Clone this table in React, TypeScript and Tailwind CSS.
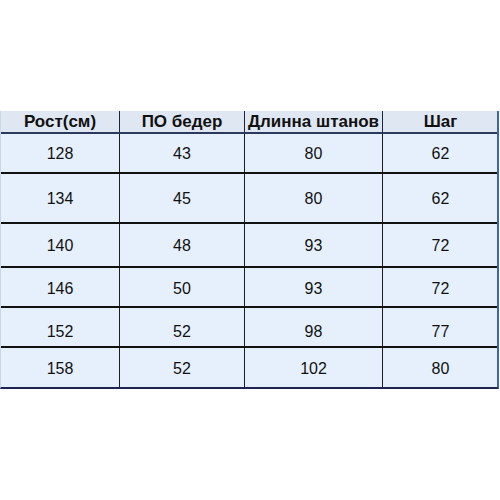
const header = ['Рост(см)', 'ПО бедер', 'Длинна штанов', 'Шаг'];

const rows = [
  { h: 'h-[40px]', pad: 'pt-[2px]', cells: ['128', '43', '80', '62'] },
  { h: 'h-[50px]', pad: 'pt-[2px]', cells: ['134', '45', '80', '62'] },
  { h: 'h-[44px]', pad: 'pt-[2px]', cells: ['140', '48', '93', '72'] },
  { h: 'h-[40px]', pad: 'pt-[4px]', cells: ['146', '50', '93', '72'] },
  { h: 'h-[40px]', pad: 'pt-[10px]', cells: ['152', '52', '98', '77'] },
  { h: 'h-[39px]', pad: 'pt-[2px]', cells: ['158', '52', '102', '80'] },
];

const cols = 'grid grid-cols-[119px_125px_138px_115px]';

export default function App() {
  return (
    <div className="w-[500px] h-[500px] bg-white pt-[111px] font-['Liberation_Sans',Arial,sans-serif]">
      <div className="w-[499px] border-l border-l-[#c9d6e6] border-r-2 border-r-[#3a68a8] border-b-2 border-b-[#1b2550]">
        {/* Header */}
        <div className={`${cols} h-[23px] bg-[#dfe7f2] border-b-2 border-b-[#2b3a5c]`}>
          {header.map((t, i) => (
            <div
              key={t}
              className={`flex items-center justify-center text-[17px] font-bold text-[#111] leading-none ${
                i < 3 ? 'border-r border-r-[#1c2540]' : ''
              }`}
            >
              {t}
            </div>
          ))}
        </div>

        {/* Body */}
        {rows.map((r, ri) => (
          <div
            key={ri}
            className={`${cols} ${r.h} bg-[#e6f0fc] ${
              ri < rows.length - 1 ? 'border-b-2 border-b-[#111]' : ''
            }`}
          >
            {r.cells.map((c, i) => (
              <div
                key={i}
                className={`flex items-center justify-center text-[16px] text-[#111] leading-none ${r.pad} ${
                  i < 3 ? 'border-r border-r-[#1c1c24]' : ''
                }`}
              >
                {c}
              </div>
            ))}
          </div>
        ))}
      </div>
    </div>
  );
}
